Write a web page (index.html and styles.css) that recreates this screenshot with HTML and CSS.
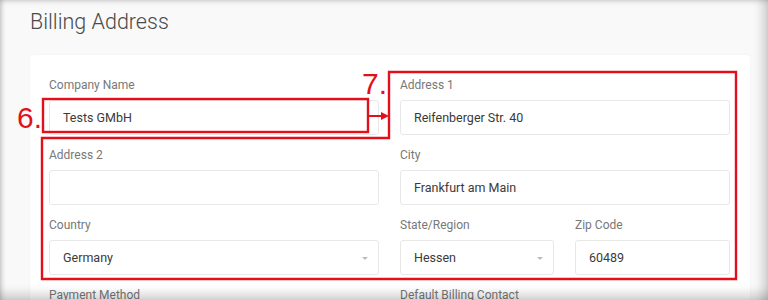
FILE: index.html
```html
<!DOCTYPE html>
<html lang="en">
<head>
    <meta charset="UTF-8">
    <meta name="viewport" content="width=device-width, initial-scale=1.0">
    <title>Billing Address</title>
    <link rel="stylesheet" href="styles.css">
</head>
<body>
    <div class="shot">
        <h1 class="title">Billing Address</h1>

        <div class="card">
            <div class="grid">
                <div class="field">
                    <div class="label">Company Name</div>
                    <div class="input">Tests GMbH</div>
                </div>
                <div class="field">
                    <div class="label">Address 1</div>
                    <div class="input">Reifenberger Str. 40</div>
                </div>

                <div class="field">
                    <div class="label">Address 2</div>
                    <div class="input"></div>
                </div>
                <div class="field">
                    <div class="label">City</div>
                    <div class="input">Frankfurt am Main</div>
                </div>

                <div class="field">
                    <div class="label">Country</div>
                    <div class="input select">Germany<span class="caret"></span></div>
                </div>
                <div class="split">
                    <div class="field">
                        <div class="label">State/Region</div>
                        <div class="input select">Hessen<span class="caret"></span></div>
                    </div>
                    <div class="field">
                        <div class="label">Zip Code</div>
                        <div class="input">60489</div>
                    </div>
                </div>

                <div class="field">
                    <div class="label">Payment Method</div>
                </div>
                <div class="field">
                    <div class="label">Default Billing Contact</div>
                </div>
            </div>
        </div>

        <!-- red annotation marks drawn over the form -->
        <svg class="marks" width="768" height="300" viewBox="0 0 768 300">
            <rect x="43" y="99" width="325" height="33" fill="none" stroke="#e3101b" stroke-width="2.4"/>
            <polygon points="389,72 736,72 736,279 42,279 42,138 389,138" fill="none" stroke="#e3101b" stroke-width="2.4"/>
            <line x1="368" y1="116" x2="383" y2="116" stroke="#e3101b" stroke-width="2"/>
            <polygon points="381,112 389,116 381,120" fill="#e3101b"/>
            <text x="17" y="128" class="num">6.</text>
            <text x="362" y="94" class="num">7.</text>
        </svg>

        <div class="frame"></div>
    </div>
</body>
</html>
```

FILE: styles.css
```css
html, body {
    margin: 0;
    padding: 0;
}
body {
    width: 768px;
    height: 300px;
    overflow: hidden;
    background: #fff;
    font-family: Roboto, "Liberation Sans", sans-serif;
}
.shot {
    position: relative;
    width: 768px;
    height: 300px;
    overflow: hidden;
    background: #f9f9f9;
    padding: 0 18px 0 30px;
    box-sizing: border-box;
}
.title {
    margin: 0;
    padding-top: 9px;
    height: 55px;
    box-sizing: border-box;
    font-size: 21.5px;
    font-weight: 300;
    line-height: 26px;
    color: #4a4a4a;
}
.card {
    width: 720px;
    background: #fff;
    border-radius: 4px;
    box-shadow: 0 0 2px rgba(0, 0, 0, 0.06);
    padding: 22px 20px 0 19px;
    box-sizing: border-box;
    height: 300px;
}
.grid {
    display: grid;
    grid-template-columns: 330px 330px;
    column-gap: 21px;
    row-gap: 12px;
}
.split {
    display: grid;
    grid-template-columns: 154px 155px;
    column-gap: 21px;
}
.label {
    font-size: 12px;
    line-height: 16px;
    color: #787878;
    margin-bottom: 7px;
}
.input {
    position: relative;
    height: 35px;
    box-sizing: border-box;
    border: 1px solid #e8e8e8;
    border-radius: 3px;
    background: #fff;
    padding: 0 13px;
    font-size: 12.5px;
    line-height: 33px;
    color: #3a3a3a;
}
.caret {
    position: absolute;
    right: 10px;
    top: 16px;
    width: 0;
    height: 0;
    border-left: 3px solid transparent;
    border-right: 3px solid transparent;
    border-top: 3px solid #bbb;
}
.marks {
    position: absolute;
    left: 0;
    top: 0;
}
.num {
    font-family: "Liberation Sans", Arial, sans-serif;
    font-size: 30px;
    fill: #e3101b;
}
.frame {
    position: absolute;
    left: 0;
    top: 0;
    width: 768px;
    height: 300px;
    pointer-events: none;
    box-shadow:
        inset 4px 0 5px -2px rgba(0, 0, 0, 0.18),
        inset 0 4px 5px -2px rgba(0, 0, 0, 0.12),
        inset -12px 0 10px -6px rgba(0, 0, 0, 0.16),
        inset 0 -13px 10px -6px rgba(0, 0, 0, 0.16);
}
```
